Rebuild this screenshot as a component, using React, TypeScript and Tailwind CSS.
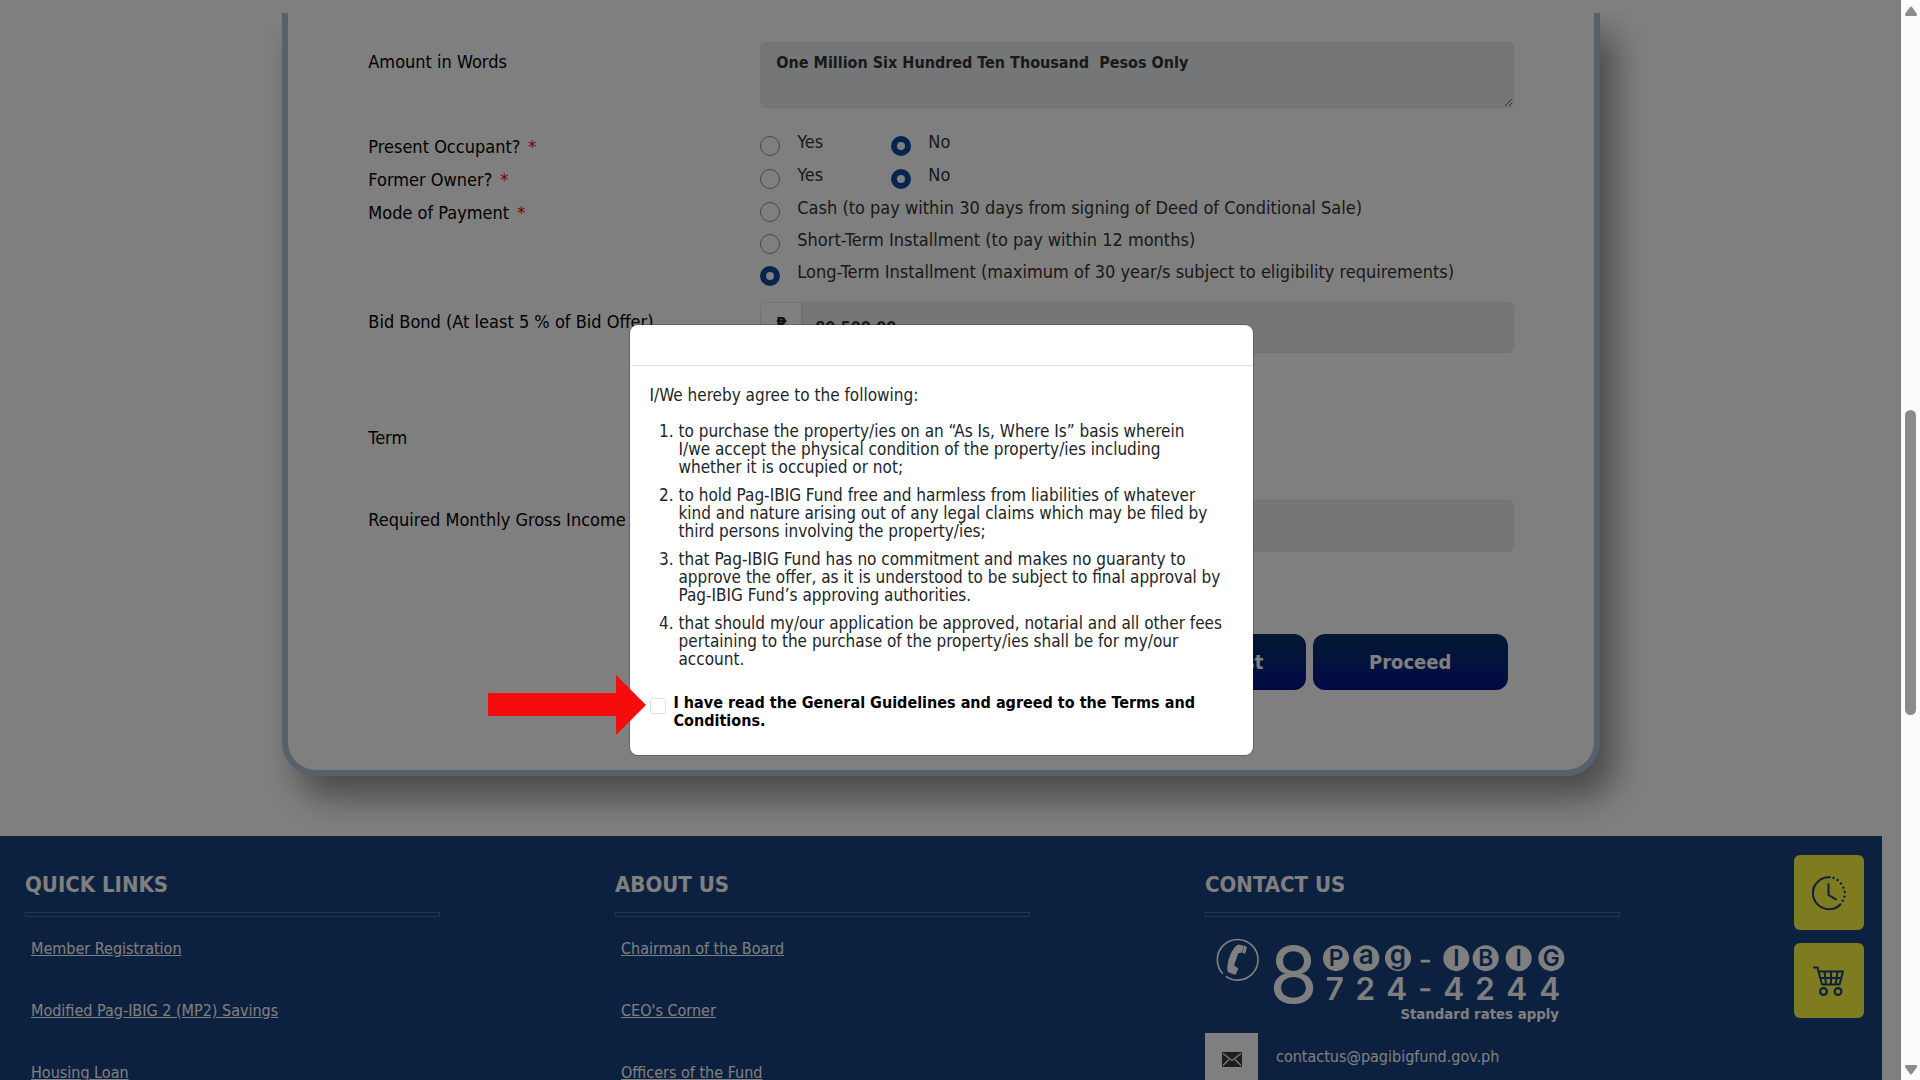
import React from "react";

const quickLinks = ["Member Registration", "Modified Pag-IBIG 2 (MP2) Savings", "Housing Loan"];
const aboutLinks = ["Chairman of the Board", "CEO's Corner", "Officers of the Fund"];

const terms = [
  "to purchase the property/ies on an “As Is, Where Is” basis wherein\nI/we accept the physical condition of the property/ies including\nwhether it is occupied or not;",
  "to hold Pag-IBIG Fund free and harmless from liabilities of whatever kind and nature arising out of any legal claims which may be filed by third persons involving the property/ies;",
  "that Pag-IBIG Fund has no commitment and makes no guaranty to approve the offer, as it is understood to be subject to final approval by Pag-IBIG Fund’s approving authorities.",
  "that should my/our application be approved, notarial and all other fees pertaining to the purchase of the property/ies shall be for my/our account.",
];

function Radio({ name, label, checked = false }: { name: string; label: string; checked?: boolean }) {
  return (
    <label className="flex h-8 items-start gap-[17px]">
      <input
        type="radio"
        name={name}
        defaultChecked={checked}
        className="mt-[6px] size-5 shrink-0 appearance-none rounded-full border border-[#8793a0] bg-white checked:border-[6px] checked:border-[#0a4a9c]"
      />
      <span className="leading-6 text-[#333]">{label}</span>
    </label>
  );
}

function FieldLabel({ htmlFor, children, required = false }: { htmlFor?: string; children: React.ReactNode; required?: boolean }) {
  const mark = required ? <span className="ml-2 text-[#f00000]">*</span> : null;
  return htmlFor ? (
    <label htmlFor={htmlFor} className="leading-6 text-black">{children}{mark}</label>
  ) : (
    <div className="leading-6 text-black">{children}{mark}</div>
  );
}

function FooterColumn({ title, children }: { title: string; children: React.ReactNode }) {
  return (
    <section className="w-[415px]">
      <h2 className="text-[22px] leading-7 font-bold">{title}</h2>
      <div className="mt-[13px] h-[5px] border border-[#4b6a9b]" />
      {children}
    </section>
  );
}

function LinkList({ items }: { items: string[] }) {
  return (
    <ul className="ml-[6px] mt-5 flex flex-col gap-[38px] text-base leading-6">
      {items.map((t) => (
        <li key={t}>
          <a href="#" className="underline">{t}</a>
        </li>
      ))}
    </ul>
  );
}

const badges: [string, number][] = [["P", 438], ["a", 529], ["g", 624], ["I", 799], ["B", 887], ["I", 986], ["G", 1084]];
const digits: [string, number][] = [["7", 434], ["2", 526], ["4", 620], ["4", 791], ["2", 885], ["4", 980], ["4", 1079]];

function HotlineLogo() {
  return (
    <svg viewBox="72 50 1056 260" className="block h-[87px] w-[352px]" fill="#fff" fontFamily="Inter, sans-serif" role="img" aria-label="Hotline">
      <circle cx="143" cy="121" r="61" fill="none" stroke="#fff" strokeWidth="5" strokeDasharray="133 12 240" />
      <path d="M145 75l17 4-6 20-11 2-13 36 9 7-8 20-18-5c-9-11 5-73 30-84z" />
      <path d="M163 77l8 6-6 20-8-3zM139 143l6 5-8 18-9-2z" />
      <text x="311" y="249" fontSize="236" textAnchor="middle">8</text>
      {badges.map(([c, x], i) => (
        <g key={i}>
          <circle cx={x} cy="116" r="39" />
          <text x={x} y={c === "a" || c === "g" ? 134 : 140} fontSize={c === "a" || c === "g" ? 78 : 68} fontWeight="600" textAnchor="middle" fill="#18407e">{c}</text>
        </g>
      ))}
      <path d="M692 121h28v8h-28zM691 206h30v9h-30z" />
      {digits.map(([c, x], i) => (
        <text key={i} x={x} y="240" fontSize="94" fontWeight="600" textAnchor="middle">{c}</text>
      ))}
      <text x="1107" y="297" fontSize="40" fontWeight="700" textAnchor="end" fontFamily="DejaVu Sans, sans-serif">Standard rates apply</text>
    </svg>
  );
}

function ClockIcon() {
  return (
    <svg viewBox="0 0 34 34" className="size-[34px]" fill="none" stroke="#18407e" strokeWidth="2" strokeLinecap="round">
      <path d="M18 1.2A16 16 0 1 0 28.5 28.2" />
      <path d="M16.5 8v11l7.500 4.300" />
      <g fill="#18407e" stroke="none">
        <circle cx="21.500" cy="2" r="1.200" /><circle cx="25.600" cy="4" r="1.200" /><circle cx="29" cy="7.400" r="1.200" />
        <circle cx="31.500" cy="11.600" r="1.200" /><circle cx="32.700" cy="16" r="1.200" /><circle cx="32.400" cy="20.600" r="1.200" /><circle cx="30.800" cy="24.800" r="1.200" />
      </g>
    </svg>
  );
}

function CartIcon() {
  return (
    <svg viewBox="0 0 32 30" className="h-[30px] w-8" fill="none" stroke="#18407e" strokeWidth="2" strokeLinejoin="round">
      <path d="M0 1.500h4.500L9 18.500h17.500L30 5.500H5.500M6.500 12h21.700M11.500 5.500l1.500 13M18 5.500v13M24.500 5.500l-1.800 13" />
      <circle cx="10.500" cy="25.500" r="3.400" strokeWidth="2.200" />
      <circle cx="25" cy="25.500" r="3.400" strokeWidth="2.200" />
    </svg>
  );
}

const actionButton = "h-14 w-[195px] rounded-xl bg-linear-to-b from-[#083068] to-[#08108c] text-xl font-bold text-white";
const readOnly = "border border-[#e2e5e8] bg-[#e9ecef] font-bold text-[#333] outline-none";

export default function App() {
  return (
    <div className="relative flex h-screen overflow-hidden bg-white font-['DejaVu_Sans_Condensed','Noto_Sans',sans-serif] text-lg">
      <div className="flex min-w-0 flex-1 flex-col pr-[19px]">
        <main className="mt-[13px] overflow-hidden pb-[60px]">
          <form
            onSubmit={(e) => e.preventDefault()}
            className="mx-auto w-[70%] rounded-b-[34px] border-x-6 border-b-6 border-[#aac2da] bg-white px-20 pt-[29px] pb-20 shadow-[15px_22px_34px_rgba(0,0,0,0.42)]"
          >
            <div className="grid grid-cols-[392px_1fr]">
              <div className="pt-[6px]"><FieldLabel htmlFor="words">Amount in Words</FieldLabel></div>
              <textarea id="words" readOnly defaultValue="One Million Six Hundred Ten Thousand  Pesos Only" className={`h-[66px] w-full rounded-md px-[15px] py-2 text-base leading-6 ${readOnly}`} />
            </div>

            <div className="mt-[22px] grid grid-cols-[392px_1fr]">
              <div className="flex flex-col gap-[9px] pt-[5px]">
                <FieldLabel required>Present Occupant?</FieldLabel>
                <FieldLabel required>Former Owner?</FieldLabel>
                <FieldLabel required>Mode of Payment</FieldLabel>
              </div>
              <div className="grid grid-cols-[131px_1fr] gap-y-px">
                <Radio name="occupant" label="Yes" />
                <Radio name="occupant" label="No" checked />
                <Radio name="owner" label="Yes" />
                <Radio name="owner" label="No" checked />
                <div className="col-span-2 flex flex-col">
                  <Radio name="mode" label="Cash (to pay within 30 days from signing of Deed of Conditional Sale)" />
                  <Radio name="mode" label="Short-Term Installment (to pay within 12 months)" />
                  <Radio name="mode" label="Long-Term Installment (maximum of 30 year/s subject to eligibility requirements)" checked />
                </div>
              </div>
            </div>

            <div className="mt-[10px] grid grid-cols-[392px_1fr]">
              <div className="pt-[6px]"><FieldLabel htmlFor="bond">Bid Bond (At least 5 % of Bid Offer)</FieldLabel></div>
              <div className="flex h-[51px]">
                <span className="flex w-[42px] items-center justify-center rounded-l-md border border-[#e2e5e8] pb-2 text-base font-bold text-[#222]">₱</span>
                <input id="bond" readOnly defaultValue="80,500.00" className={`min-w-0 flex-1 rounded-r-md px-3 text-base ${readOnly}`} />
              </div>
            </div>

            <div className="mt-[73px]"><FieldLabel>Term</FieldLabel></div>

            <div className="mt-[50px] grid grid-cols-[392px_1fr]">
              <div className="pt-[6px]"><FieldLabel htmlFor="income">Required Monthly Gross Income</FieldLabel></div>
              <input id="income" readOnly className={`h-[52px] rounded-md px-3 text-base ${readOnly}`} />
            </div>

            <div className="mt-[82px] flex justify-end gap-[7px] pr-[6px]">
              <button type="button" className={actionButton}>Add to List</button>
              <button type="submit" className={actionButton}>Proceed</button>
            </div>
          </form>
        </main>

        <footer className="flex-1 overflow-hidden bg-[#18407e] pl-[25px] pt-[35px] text-white">
          <div className="flex gap-[175px]">
            <FooterColumn title="QUICK LINKS"><LinkList items={quickLinks} /></FooterColumn>
            <FooterColumn title="ABOUT US"><LinkList items={aboutLinks} /></FooterColumn>
            <FooterColumn title="CONTACT US">
              <div className="ml-[9px] mt-[19px]"><HotlineLogo /></div>
              <div className="mt-[10px] flex gap-[18px]">
                <span className="flex h-[53px] w-[53px] items-center justify-center bg-white">
                  <svg viewBox="0 0 20 15" className="h-[15px] w-5">
                    <rect width="20" height="15" rx="1" fill="#3a3a3a" />
                    <path d="M1 1.500l9 7 9-7M1 13.500l6-6M19 13.500l-6-6" fill="none" stroke="#fff" strokeWidth="1.200" />
                  </svg>
                </span>
                <a href="#" className="mt-[12px] text-base leading-6">contactus@pagibigfund.gov.ph</a>
              </div>
            </FooterColumn>
          </div>
        </footer>
      </div>

      <div className="absolute right-14 bottom-[62px] flex flex-col gap-[13px]">
        <button type="button" aria-label="History" className="flex h-[75px] w-[70px] items-center justify-center rounded-md bg-[#fef640]"><ClockIcon /></button>
        <button type="button" aria-label="Cart" className="flex h-[75px] w-[70px] items-center justify-center rounded-md bg-[#fef640]"><CartIcon /></button>
      </div>

      <div className="absolute inset-0 flex justify-center bg-black/50 pr-[38px]">
        <div role="dialog" aria-modal="true" className="relative mt-[325px] h-fit w-[623px] rounded-lg bg-white text-[#212529] shadow-[0_0_0_1px_rgba(0,0,0,0.2)]">
          <div className="h-[41px] border-b border-[#dee2e6]" />
          <div className="px-5 pt-5 pb-[25px] text-[17px] leading-[18px]">
            <p>I/We hereby agree to the following:</p>
            <ol className="mt-[18px] ml-[29px] flex list-decimal flex-col gap-[10px] whitespace-pre-line">
              {terms.map((t) => <li key={t}>{t}</li>)}
            </ol>
            <label className="mt-[26px] flex gap-2 text-base leading-[18px] font-bold text-black">
              <input type="checkbox" className="mt-[4px] size-4 shrink-0 appearance-none rounded-[3px] border border-[#dee2e6] bg-white" />
              <span>I have read the General Guidelines and agreed to the Terms and Conditions.</span>
            </label>
          </div>
          <svg viewBox="0 0 158 60" className="absolute bottom-5 -left-[142px] h-[60px] w-[158px]" aria-hidden="true">
            <path d="M0 18h128V0l30 30-30 30V41H0z" fill="#f50d0d" />
          </svg>
        </div>
      </div>

      <div className="relative flex w-[19px] flex-col items-center bg-[#fcfcfc]" aria-hidden="true">
        <svg viewBox="0 0 12 10" className="mt-[6px] h-[10px] w-3" fill="#8b8b8b"><path d="M5 1q1-1 2 0l5 7q0 2-1 2H1Q0 10 0 8z" /></svg>
        <div className="mt-[394px] h-[305px] w-[11px] rounded-full bg-[#8b8b8b]" />
        <svg viewBox="0 0 12 10" className="mt-auto mb-[5px] h-[10px] w-3" fill="#8b8b8b"><path d="M5 9q1 1 2 0l5-7q0-2-1-2H1Q0 0 0 2z" /></svg>
      </div>
    </div>
  );
}
